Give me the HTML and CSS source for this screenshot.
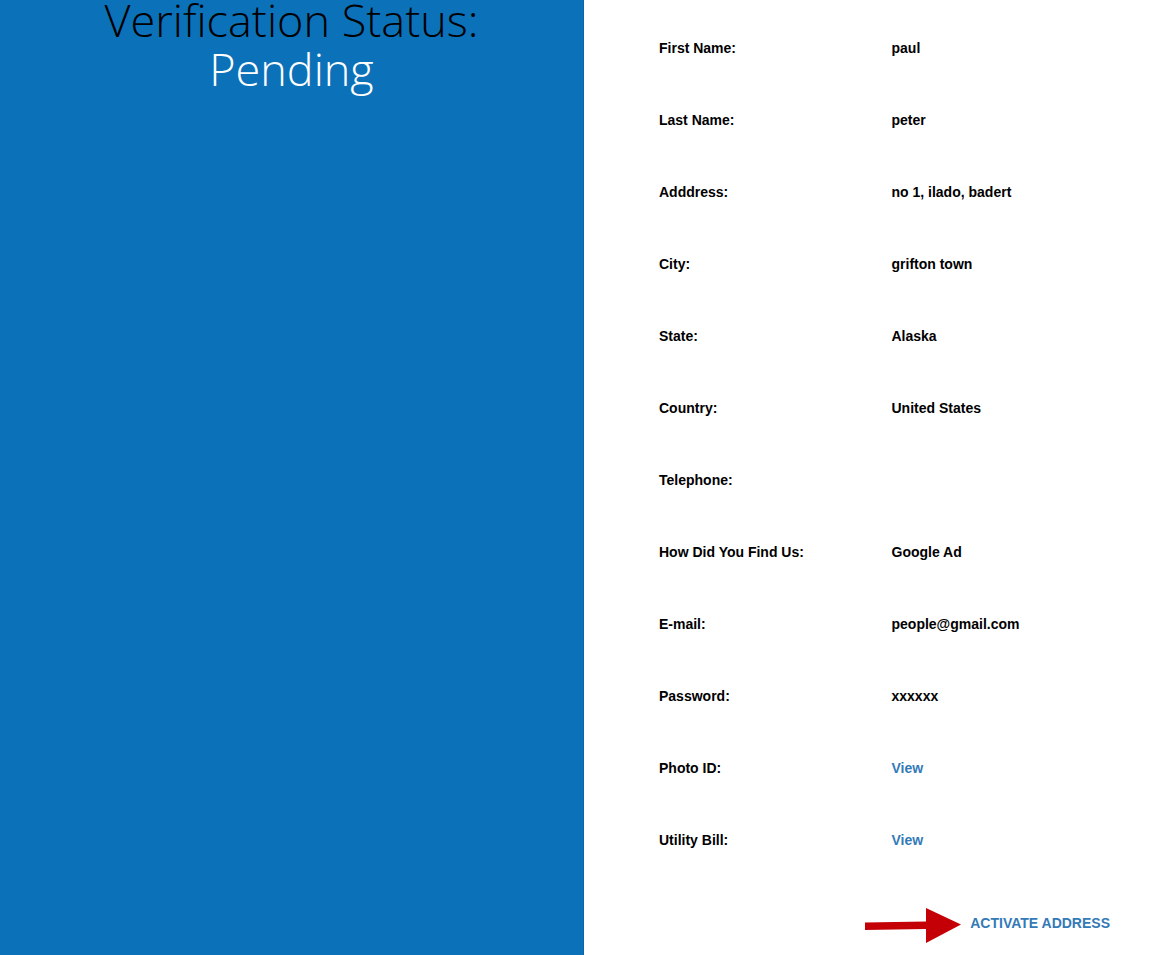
FILE: index.html
```html
<!DOCTYPE html>
<html lang="en">
<head>
<meta charset="utf-8">
<title>Verification Status</title>
<link rel="stylesheet" href="styles.css">
</head>
<body>
<main class="page">
  <section class="status">
    <h1 class="status-title">Verification Status: <span class="status-value">Pending</span></h1>
  </section>
  <section class="details">
    <dl class="fields">
      <div class="field"><dt>First Name:</dt><dd>paul</dd></div>
      <div class="field"><dt>Last Name:</dt><dd>peter</dd></div>
      <div class="field"><dt>Adddress:</dt><dd>no 1, ilado, badert</dd></div>
      <div class="field"><dt>City:</dt><dd>grifton town</dd></div>
      <div class="field"><dt>State:</dt><dd>Alaska</dd></div>
      <div class="field"><dt>Country:</dt><dd>United States</dd></div>
      <div class="field"><dt>Telephone:</dt><dd></dd></div>
      <div class="field"><dt>How Did You Find Us:</dt><dd>Google Ad</dd></div>
      <div class="field"><dt>E-mail:</dt><dd>people@gmail.com</dd></div>
      <div class="field"><dt>Password:</dt><dd>xxxxxx</dd></div>
      <div class="field"><dt>Photo ID:</dt><dd><a class="link" href="#photo-id">View</a></dd></div>
      <div class="field"><dt>Utility Bill:</dt><dd><a class="link" href="#utility-bill">View</a></dd></div>
    </dl>
    <div class="actions">
      <svg class="arrow" width="98" height="36" viewBox="0 0 98 36" aria-hidden="true">
        <path fill="#c40006" d="M1 15.500L62 14.500V1L97 17.500L62 36V22L1 23Z"/>
      </svg>
      <a class="link activate" href="#activate">ACTIVATE ADDRESS</a>
    </div>
  </section>
</main>
</body>
</html>
```
FILE: styles.css
```css
* {
  box-sizing: border-box;
}

body {
  margin: 0;
  background: #fff;
  color: #000;
  font-family: "Liberation Sans", Arial, sans-serif;
  font-size: 14px;
  font-weight: bold;
  line-height: 20px;
}

.page {
  display: grid;
  grid-template-columns: 1fr 1fr;
  min-height: 100vh;
}

.status {
  background: #0b71b9;
  border-right: 1px solid #0a66a8;
  overflow: hidden;
}

.status-title {
  margin: -5px 0 0;
  font-family: "Open Sans", sans-serif;
  font-size: 45px;
  font-weight: 300;
  line-height: 49px;
  text-align: center;
}

.status-value {
  display: block;
  color: #fff;
}

.details {
  padding: 12px 44px 0 75px;
}

.fields {
  margin: 0;
}

.field {
  display: grid;
  grid-template-columns: 1fr 1fr;
  align-items: center;
  height: 72px;
}

.field dd {
  margin: 0;
}

.link {
  color: #337ab7;
  text-decoration: none;
}

.actions {
  display: flex;
  align-items: center;
  justify-content: flex-end;
  gap: 8px;
  padding: 31px 14px 0 0;
}

.activate {
  padding-bottom: 4px;
}
```
